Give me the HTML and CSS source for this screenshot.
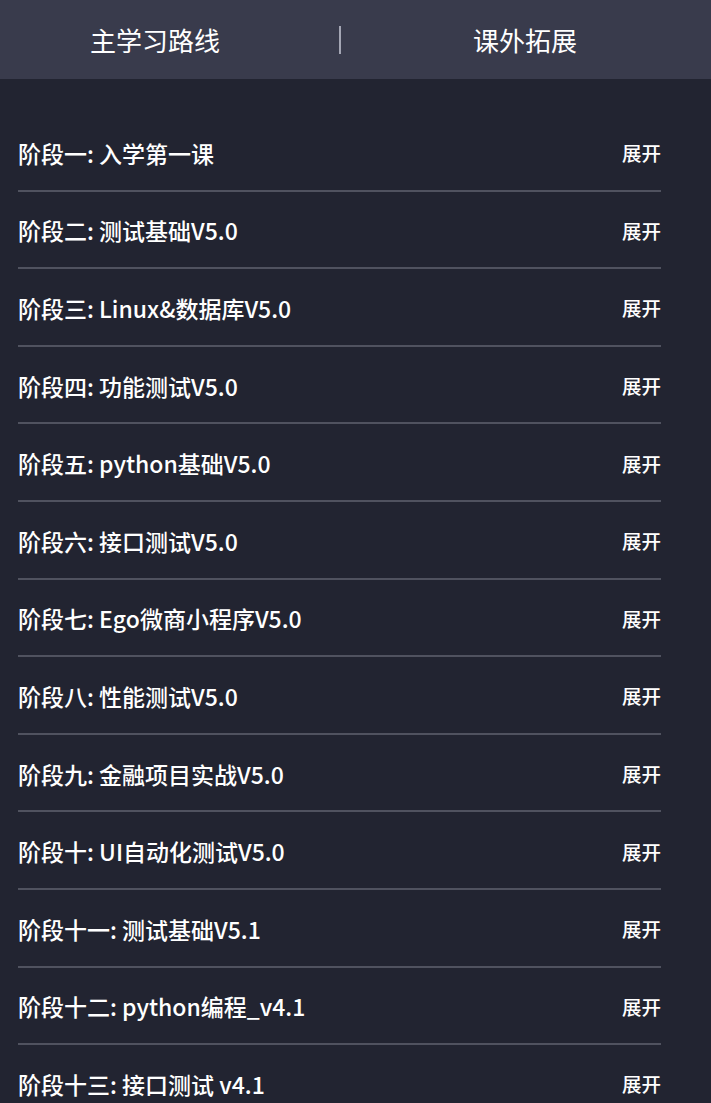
FILE: index.html
```html
<!DOCTYPE html>
<html lang="zh-CN">
<head>
    <meta charset="UTF-8">
    <title>学习路线</title>
    <link rel="stylesheet" href="styles.css">
</head>
<body>
<div id="wrap">
    <div class="tabs">
        <span class="tab">主学习路线</span>
        <span class="sep"></span>
        <span class="tab">课外拓展</span>
    </div>
    <ul class="list">
        <li class="row"><span class="name">阶段一: 入学第一课</span><span class="more">展开</span></li>
        <li class="row"><span class="name">阶段二: 测试基础V5.0</span><span class="more">展开</span></li>
        <li class="row"><span class="name">阶段三: Linux&amp;数据库V5.0</span><span class="more">展开</span></li>
        <li class="row"><span class="name">阶段四: 功能测试V5.0</span><span class="more">展开</span></li>
        <li class="row"><span class="name">阶段五: python基础V5.0</span><span class="more">展开</span></li>
        <li class="row"><span class="name">阶段六: 接口测试V5.0</span><span class="more">展开</span></li>
        <li class="row"><span class="name">阶段七: Ego微商小程序V5.0</span><span class="more">展开</span></li>
        <li class="row"><span class="name">阶段八: 性能测试V5.0</span><span class="more">展开</span></li>
        <li class="row"><span class="name">阶段九: 金融项目实战V5.0</span><span class="more">展开</span></li>
        <li class="row"><span class="name">阶段十: UI自动化测试V5.0</span><span class="more">展开</span></li>
        <li class="row"><span class="name">阶段十一: 测试基础V5.1</span><span class="more">展开</span></li>
        <li class="row"><span class="name">阶段十二: python编程_v4.1</span><span class="more">展开</span></li>
        <li class="row"><span class="name">阶段十三: 接口测试 v4.1</span><span class="more">展开</span></li>
    </ul>
</div>
</body>
</html>
```

FILE: styles.css
```css
body, ul, li {
    margin: 0;
    padding: 0;
}

body {
    background: #222431;
    color: #ffffff;
    font-family: "Noto Sans CJK SC", "Noto Sans", sans-serif;
}

#wrap {
    width: 100%;
}

.tabs {
    height: 79px;
    background: #393b4c;
    display: grid;
    grid-template-columns: 310px 60px 310px;
    align-items: center;
}

.tab {
    text-align: center;
    font-size: 26px;
    line-height: 30px;
}

.sep {
    justify-self: center;
    width: 2px;
    height: 28px;
    background: #a4a6b4;
}

.list {
    list-style: none;
    padding: 35px 50px 0 18px;
}

.row {
    height: 77.6px;
    box-sizing: border-box;
    padding-top: 2px;
    display: flex;
    align-items: center;
    justify-content: space-between;
    border-bottom: 2px solid #50525f;
}

.name {
    font-size: 23px;
    font-weight: 500;
}

.more {
    font-size: 19.5px;
    font-weight: 500;
}
```
